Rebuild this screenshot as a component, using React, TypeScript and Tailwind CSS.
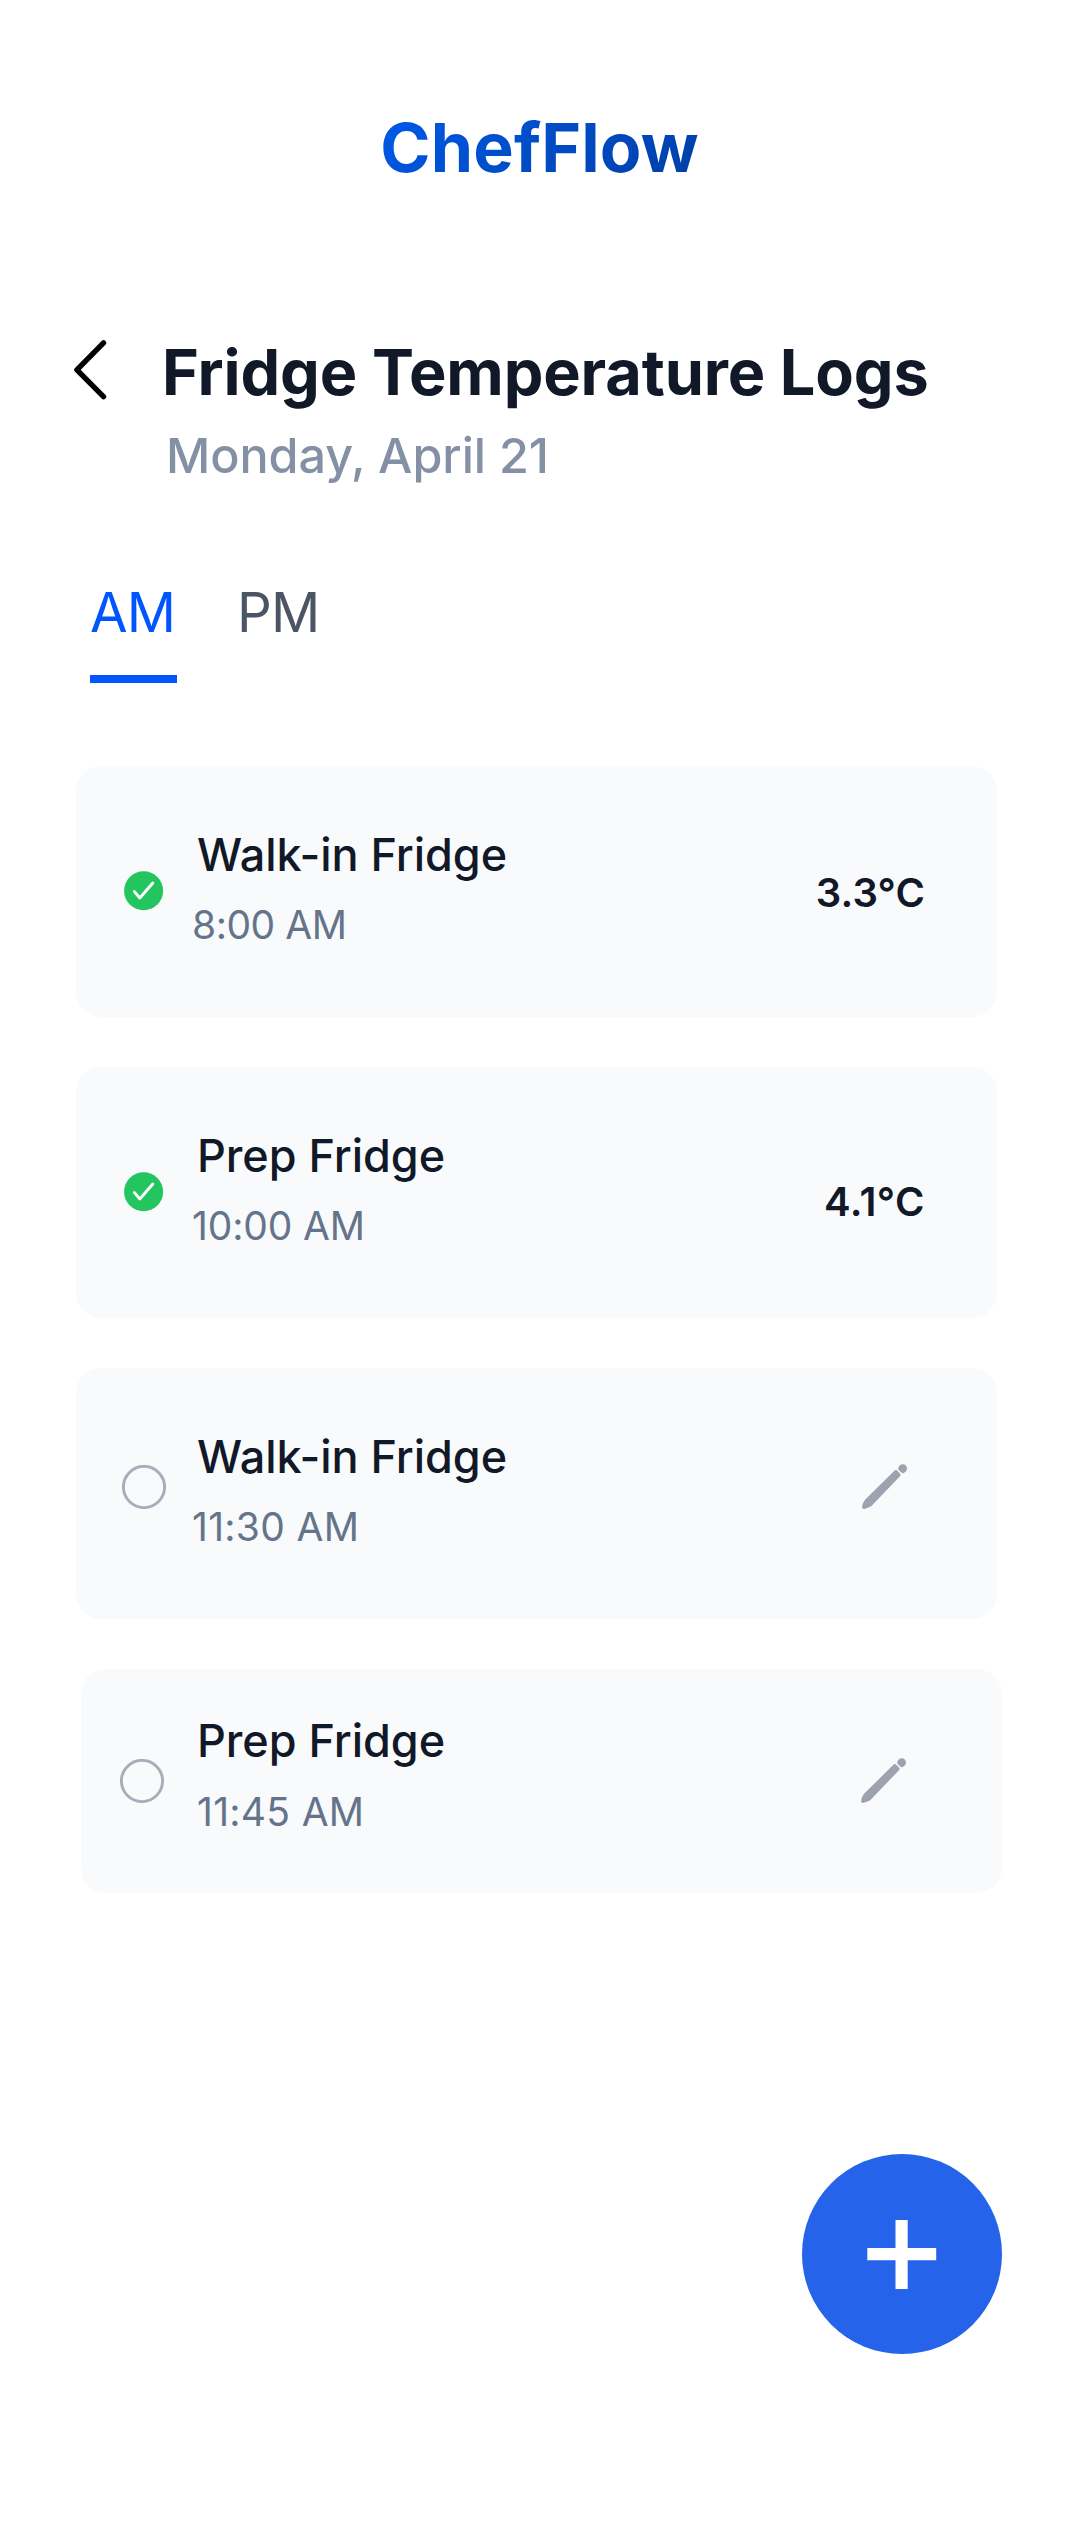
import React from "react";
import clsx from "clsx";

type Log = {
  name: string;
  time: string;
  temp?: string;
  card: string;
  icon: string;
  action: string;
  timeClass: string;
};

const logs: Log[] = [
  {
    name: "Walk-in Fridge",
    time: "8:00 AM",
    temp: "3.3°C",
    card: "ml-[76px] mr-[83px] h-[251px] pt-[62px] pl-[46px]",
    icon: "mt-[41px] w-[75px]",
    action: "mt-[41px] mr-[72px] font-semibold tracking-[0.1px]",
    timeClass: "-ml-[5px] mt-[19px] tracking-[-0.45px]",
  },
  {
    name: "Prep Fridge",
    time: "10:00 AM",
    temp: "4.1°C",
    card: "ml-[76px] mr-[83px] h-[251px] pt-[62px] pl-[46px]",
    icon: "mt-[41px] w-[75px]",
    action: "mt-[49px] mr-[72px] font-semibold tracking-[0.5px]",
    timeClass: "-ml-[5px] mt-[19px] tracking-[-0.15px]",
  },
  {
    name: "Walk-in Fridge",
    time: "11:30 AM",
    card: "ml-[76px] mr-[83px] h-[251px] pt-[62px] pl-[46px]",
    icon: "mt-[35px] w-[75px]",
    action: "mt-[34px] mr-[90px]",
    timeClass: "-ml-[5px] mt-[19px] tracking-[0.3px]",
  },
  {
    name: "Prep Fridge",
    time: "11:45 AM",
    card: "ml-[81px] mr-[78px] h-[224px] pt-[45px] pl-[39px]",
    icon: "mt-[45px] w-[77px]",
    action: "mt-[44px] mr-[96px]",
    timeClass: "mt-[20px] tracking-[0.3px]",
  },
];

function CheckIcon() {
  return (
    <svg viewBox="0 0 44 44" className="size-[44px]" fill="none">
      <circle cx="21.6" cy="21.8" r="19.5" fill="#22c55e" />
      <path d="M12.4 22.6 L17.8 29 L30.8 14" stroke="white" strokeWidth="2.9" strokeLinecap="round" strokeLinejoin="round" />
    </svg>
  );
}

function EmptyIcon() {
  return (
    <svg viewBox="0 0 44 44" className="size-[44px]" fill="none">
      <circle cx="22" cy="22" r="20.6" stroke="#9ca3af" strokeOpacity="0.88" strokeWidth="2.9" />
    </svg>
  );
}

function PencilIcon() {
  return (
    <svg viewBox="0 0 45 45" className="size-[45px]" fill="#9ca3af">
      <path d="M36.2 4.4 C37 1.6 38.6 0.2 40.8 0.2 C43.2 0.2 45 2 45 4.4 C45 6.6 43.4 8.2 41.6 9 C40.8 9.3 40.2 9.2 39.6 8.7 L36.7 6 C36.2 5.5 36 5.1 36.2 4.4 Z" />
      <path d="M32.4 6.7 C33.2 6 34.1 5.9 35 6.6 L38 9.4 C38.9 10.3 38.8 11.2 38 12.2 L10.4 41 C9.6 41.9 8.8 42.6 7.6 43 L3 44.8 C1 45.3 -0.2 44.3 0.2 42.2 C0.7 39.6 1.8 37.3 3.3 35.6 Z" />
    </svg>
  );
}

function LogCard({ log }: { log: Log }) {
  return (
    <li className={clsx("flex items-start rounded-[25px] bg-[#f9fafb]", log.card)}>
      <div className={clsx("shrink-0", log.icon)}>
        {log.temp ? <CheckIcon /> : <EmptyIcon />}
      </div>
      <div className="flex-1">
        <h2 className="text-[45px] leading-[54px] font-medium tracking-[-0.04px] text-[#111827]">{log.name}</h2>
        <p className={clsx("text-[39px] leading-[48px] text-[#64748b]", log.timeClass)}>{log.time}</p>
      </div>
      <div className={clsx("text-[40px] leading-[48px] text-[#111827]", log.action)}>
        {log.temp ?? <PencilIcon />}
      </div>
    </li>
  );
}

export default function App() {
  return (
    <div className="min-h-[2542px] w-[1080px] bg-white font-[Inter,sans-serif]">
      <header className="flex justify-center pt-[107px] pr-px">
        <div className="bg-linear-135 from-[#005ae8] to-[#003fa6] bg-clip-text text-[68px] leading-[80px] font-bold tracking-[0.15px] text-transparent">
          ChefFlow
        </div>
      </header>

      <section className="mt-[147px] flex items-start pl-[73px]">
        <button aria-label="Back" className="mt-[6px] mr-[55px]">
          <svg viewBox="0 0 34 60" className="h-[60px] w-[34px]" fill="none">
            <path d="M30.5 2.9 L3.9 29.8 L30.5 56.7" stroke="black" strokeWidth="5.4" strokeLinecap="round" strokeLinejoin="round" />
          </svg>
        </button>
        <div>
          <h1 className="text-[63px] leading-[76px] font-bold tracking-[-0.14px] text-[#111827]">Fridge Temperature Logs</h1>
          <p className="mt-[17px] ml-[4px] text-[48.5px] leading-[58px] font-medium tracking-[-0.05px] text-[#8491a5]">Monday, April 21</p>
        </div>
      </section>

      <nav className="mt-[94px] flex items-start gap-[60px] pl-[90px] text-[54.5px] leading-[66px] tracking-[-0.8px]">
        <button className="w-[87px] border-b-8 border-[#0055ff] pb-[30px] text-left text-[#0055ff]">AM</button>
        <button className="text-[#4b5563]">PM</button>
      </nav>

      <ul className="mt-[83px] flex flex-col gap-[50px]">
        {logs.map((log) => (
          <LogCard key={log.time} log={log} />
        ))}
      </ul>

      <div className="mt-[261px] flex justify-end pr-[78px]">
        <button aria-label="Add log" className="flex size-[200px] items-center justify-center rounded-full bg-[#2563eb]">
          <svg viewBox="0 0 70 70" className="size-[70px]">
            <path d="M0.3 35.2 H69.2 M34.6 1 V70" stroke="white" strokeWidth="12.2" />
          </svg>
        </button>
      </div>
    </div>
  );
}
